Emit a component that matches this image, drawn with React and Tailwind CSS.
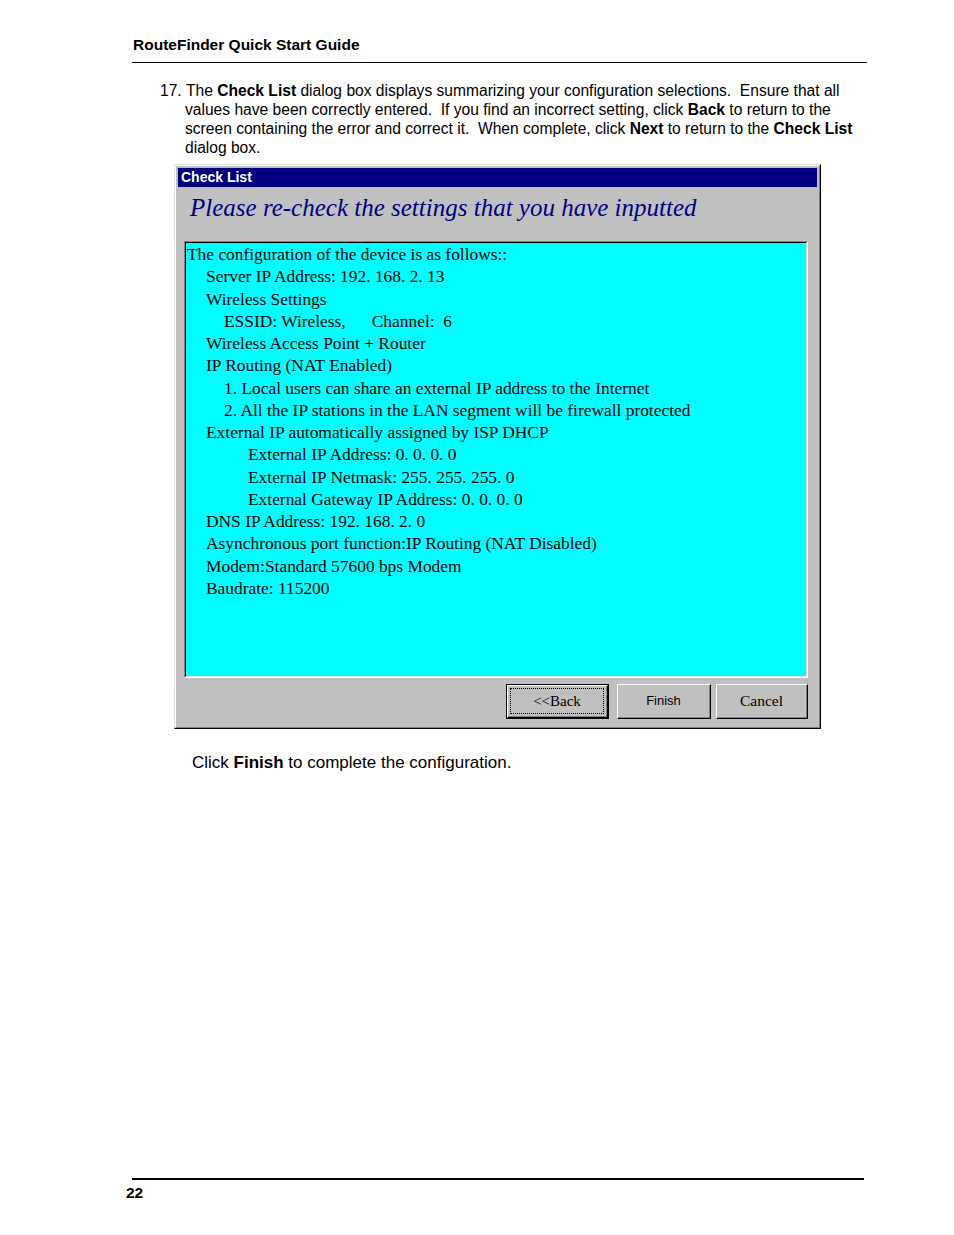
export default function App() {
  const sans = { fontFamily: '"Liberation Sans", Arial, sans-serif' };
  const serif = { fontFamily: '"Liberation Serif", "Times New Roman", serif' };
  const lines = [
    [0, "The configuration of the device is as follows::"],
    [1, "Server IP Address: 192. 168. 2. 13"],
    [1, "Wireless Settings"],
    [2, "ESSID: Wireless,\u00a0\u00a0\u00a0\u00a0\u00a0 Channel:\u00a0 6"],
    [1, "Wireless Access Point + Router"],
    [1, "IP Routing (NAT Enabled)"],
    [2, "1. Local users can share an external IP address to the Internet"],
    [2, "2. All the IP stations in the LAN segment will be firewall protected"],
    [1, "External IP automatically assigned by ISP DHCP"],
    [3, "External IP Address: 0. 0. 0. 0"],
    [3, "External IP Netmask: 255. 255. 255. 0"],
    [3, "External Gateway IP Address: 0. 0. 0. 0"],
    [1, "DNS IP Address: 192. 168. 2. 0"],
    [1, "Asynchronous port function:IP Routing (NAT Disabled)"],
    [1, "Modem:Standard 57600 bps Modem"],
    [1, "Baudrate: 115200"],
  ];
  const indent = ["pl-[1px]", "pl-[20px]", "pl-[38px]", "pl-[62px]"];
  return (
    <div className="w-[954px] h-[1235px] bg-white text-black flex flex-col" style={sans}>
      <div className="ml-[132px] w-[735px] pt-[36px] pb-[8px] border-b border-black">
        <div className="text-[15.5px] font-bold leading-[18px] pl-[1px]">RouteFinder Quick Start Guide</div>
      </div>

      <div className="ml-[160px] mt-[18px] w-[710px] pl-[25px] -indent-[25px] text-[15.6px] leading-[19px]">
        17.&nbsp;The <b>Check List</b> dialog box displays summarizing your configuration selections.&nbsp; Ensure that all values have been correctly entered.&nbsp; If you find an incorrect setting, click <b>Back</b> to return to the screen containing the error and correct it.&nbsp; When complete, click <b>Next</b> to return to the <b>Check List</b> dialog box.
      </div>

      <div className="ml-[174px] mt-[7px] w-[647px] h-[565px] border border-t-[#dfdfdf] border-l-[#dfdfdf] border-r-black border-b-black">
        <div className="h-full border border-t-white border-l-white border-r-[#808080] border-b-[#808080] bg-[#c0c0c0] p-[2px] flex flex-col">
          <div className="h-[19px] bg-[#000080] text-white text-[14px] font-bold leading-[19px] pl-[3px]">Check List</div>
          <div className="mt-[7px] pl-[12px] text-[25px] italic leading-[28px] text-[#000080]" style={serif}>
            Please re-check the settings that you have inputted
          </div>
          <div className="mt-[19px] ml-[6px] mr-[9px] h-[437px] border border-t-[#808080] border-l-[#808080] border-r-white border-b-white">
            <div className="h-full border border-t-black border-l-black border-r-[#dfdfdf] border-b-[#dfdfdf] bg-[#00ffff] pt-0 text-[17.4px] leading-[22.25px]" style={serif}>
              {lines.map(([lvl, t], i) => (
                <div key={i} className={indent[lvl] + " whitespace-pre"}>{t}</div>
              ))}
            </div>
          </div>
          <div className="mt-[6px] flex justify-end pr-[9px] gap-[5px]">
            <div className="w-[103px] h-[35px] border border-black mr-[3px]">
              <div className="h-full border border-t-white border-l-white border-r-black border-b-black">
                <div className="h-full border-r border-b border-[#808080] p-[2px]">
                  <div className="h-full border border-dotted border-black flex items-center justify-center text-[15px]" style={serif}>&lt;&lt;Back</div>
                </div>
              </div>
            </div>
            <div className="w-[94px] h-[35px] border border-t-white border-l-white border-r-black border-b-black">
              <div className="h-full border-r border-b border-[#808080] flex items-center justify-center text-[13px]" style={sans}>Finish</div>
            </div>
            <div className="w-[92px] h-[35px] border border-t-white border-l-white border-r-black border-b-black">
              <div className="h-full border-r border-b border-[#808080] flex items-center justify-center text-[15.5px]" style={serif}>Cancel</div>
            </div>
          </div>
        </div>
      </div>

      <div className="ml-[192px] mt-[24px] text-[17px] leading-[19px]">
        Click <b>Finish</b> to complete the configuration.
      </div>

      <div className="flex-1" />
      <div className="ml-[132px] w-[732px] border-t-2 border-black" />
      <div className="ml-[126px] mt-[4px] text-[15.5px] font-bold leading-[18px] mb-[33px]">22</div>
    </div>
  );
}
